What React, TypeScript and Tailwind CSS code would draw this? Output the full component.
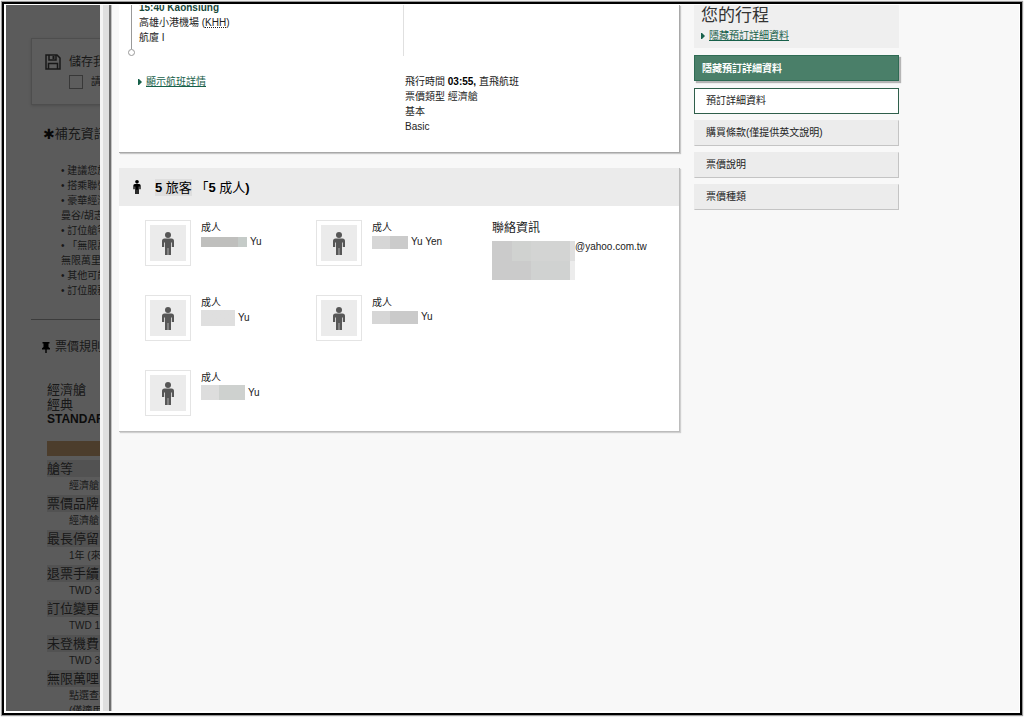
import { useState } from "react";
import type { ReactNode } from "react";

interface Passenger {
  id: number;
  name: string;
  mask: string;
  tint: string;
}

const passengers: Passenger[] = [
  { id: 1, name: "Yu", mask: "w-[46px] h-[10px]", tint: "from-[#bfbfbd] from-80% to-[#c5cbc8] to-80%" },
  { id: 2, name: "Yu Yen", mask: "w-[36px] h-[13px]", tint: "from-[#d6d6d6] from-50% to-[#cbcbcb] to-50%" },
  { id: 3, name: "Yu", mask: "w-[34px] h-[16px]", tint: "from-[#dfdfdf] to-[#dfdfdf]" },
  { id: 4, name: "Yu", mask: "w-[46px] h-[13px]", tint: "from-[#d6d6d6] from-40% to-[#cacaca] to-40%" },
  { id: 5, name: "Yu", mask: "w-[44px] h-[15px]", tint: "from-[#dddddd] from-40% to-[#ced1cf] to-40%" },
];

const notes = [
  "• 建議您於",
  "• 搭乘聯營",
  "• 豪華經濟",
  "曼谷/胡志",
  "• 訂位艙等",
  "• 「無限萬",
  "無限萬里遊",
  "• 其他可能",
  "• 訂位服務",
];

const fareRules = [
  { title: "艙等", detail: "經濟艙" },
  { title: "票價品牌", detail: "經濟艙" },
  { title: "最長停留", detail: "1年 (來回)" },
  { title: "退票手續", detail: "TWD 3000" },
  { title: "訂位變更", detail: "TWD 1000" },
  { title: "未登機費", detail: "TWD 3000" },
  { title: "無限萬哩", detail: "點選查看" },
];

const tabs = ["預訂詳細資料", "購買條款(僅提供英文說明)", "票價說明", "票價種類"];

function PersonIcon({ className }: { className: string }) {
  return (
    <svg viewBox="0 0 12 23" className={className} fill="currentColor" aria-hidden="true">
      <circle cx="6" cy="3" r="3" />
      <path d="M2.500 6.500h7A2.500 2.500 0 0 1 12 9v6H9.800v-4.500H9V23H6.300v-7h-.6v7H3V10.500h-.8V15H0V9a2.500 2.500 0 0 1 2.500-2.500Z" />
    </svg>
  );
}

function SaveIcon() {
  return (
    <svg viewBox="0 0 16 16" className="size-4 shrink-0" fill="none" stroke="currentColor" strokeWidth="1.5" aria-hidden="true">
      <path d="M1 1h11l3 3v11H1V1Z" />
      <path d="M4 1v5h7V1M3.500 15V9.500h9V15" />
      <path d="M8.500 2v3" strokeWidth="2" />
    </svg>
  );
}

function PinIcon() {
  return (
    <svg viewBox="0 0 8 11" className="h-[11px] w-2 shrink-0 text-black" fill="currentColor" aria-hidden="true">
      <path d="M.5 0h7v1.500H6.500V5L8 6.300V7.500H4.700V11H3.300V7.500H0V6.300L1.500 5V1.500h-1V0Z" />
    </svg>
  );
}

function ArrowLink({ children }: { children: ReactNode }) {
  return (
    <a href="#details" className="flex items-center gap-1 text-[#17604a]">
      <svg viewBox="0 0 4 6" className="h-[6px] w-1" fill="currentColor" aria-hidden="true">
        <path d="M0 0h1l3 3-3 3H0Z" />
      </svg>
      <span className="underline">{children}</span>
    </a>
  );
}

function DimmedPage() {
  return (
    <aside className="w-[94px] shrink-0 overflow-hidden bg-[#5b5b5b] pl-[25px] whitespace-nowrap text-[#181818]">
      <div className="mt-[33px] h-[67px] w-60 border border-[#4e4e4e] bg-[#5d5d5d] pt-[15px] pl-[13px] shadow">
        <div className="flex items-center gap-2 text-xs">
          <SaveIcon />
          <span>儲存我的行程</span>
        </div>
        <label className="mt-1 ml-6 flex items-center gap-2">
          <input type="checkbox" className="size-[14px] appearance-none border border-[#383838]" />
          請寄送
        </label>
      </div>

      <section className="mt-4 h-[199px] w-60 border-b border-[#3c3c3c] pl-3">
        <h2 className="flex items-center pt-1 text-[13px] leading-[18px]">
          <span className="font-['DejaVu_Sans'] text-[14px] font-bold text-[#080808]">✱</span>
          補充資訊
        </h2>
        <ul className="mt-5 pl-[18px]">
          {notes.map((note) => (
            <li key={note}>{note}</li>
          ))}
        </ul>
      </section>

      <section className="mt-[14px] w-60 pl-4">
        <h2 className="-ml-[5px] flex items-center gap-[5px] pt-[6px] text-xs leading-[15px]">
          <PinIcon />
          票價規則
        </h2>
        <p className="mt-[27px] text-[13px] leading-[15px]">
          經濟艙
          <br />
          經典
        </p>
        <b className="block text-xs leading-[14px] text-[#0c0c0c]">STANDARD</b>
        <div className="mt-[15px] h-[15px] bg-[#4c3d2c]" />
        <dl className="mt-1">
          {fareRules.map((rule) => (
            <div key={rule.title}>
              <dt className="mt-[2px] mb-px bg-[#525252] text-[13px] leading-[17px]">{rule.title}</dt>
              <dd className="pl-[22px]">{rule.detail}</dd>
            </div>
          ))}
          <dd className="pl-[22px]">(僅適用於)</dd>
        </dl>
      </section>
    </aside>
  );
}

function FlightCard() {
  return (
    <section className="flex h-[148px] border-r border-b border-[#a8a8a8] bg-white shadow-[1px_1px_1px_#c8c8c8]">
      <div className="w-[286px] pl-[9px]">
        <div className="mr-px flex h-[51px] gap-1 border-r border-[#e0e0e0]">
          <div className="flex w-[7px] flex-col items-center">
            <span className="w-px flex-1 bg-[#999]" />
            <span className="size-[7px] rounded-full border border-[#999]" />
          </div>
          <div className="-mt-[5px]">
            <b className="block text-[#17493a]">15:40 Kaohsiung</b>
            <p>
              高雄小港機場 (<abbr title="Kaohsiung" className="underline decoration-dotted">KHH</abbr>)
            </p>
            <p>航廈 I</p>
          </div>
        </div>
        <div className="mt-[18px] pl-[10px]">
          <ArrowLink>顯示航班詳情</ArrowLink>
        </div>
      </div>
      <div className="mt-[69px]">
        <p>
          飛行時間 <b className="text-black">03:55,</b> 直飛航班
        </p>
        <p>票價類型 經濟艙</p>
        <p>基本</p>
        <p>Basic</p>
      </div>
    </section>
  );
}

function PassengerItem({ passenger }: { passenger: Passenger }) {
  return (
    <li className="flex gap-[10px]">
      <div className="flex size-[46px] items-center justify-center border border-[#e4e4e4] p-1">
        <div className="flex size-full items-center justify-center bg-[#ebebeb]">
          <PersonIcon className="h-[23px] w-3 text-[#575757]" />
        </div>
      </div>
      <div className="pt-px">
        <p className="leading-[14px]">成人</p>
        <p className="flex items-center gap-[3px] leading-[14px]">
          <span className={`bg-linear-to-r ${passenger.mask} ${passenger.tint}`} />
          {passenger.name}
        </p>
      </div>
    </li>
  );
}

function PassengersCard() {
  return (
    <section className="mt-[15px] border-r border-b border-[#bcbcbc] bg-white shadow-[1px_1px_1px_#d0d0d0]">
      <h2 className="flex h-[38px] items-center gap-[14px] bg-[#ebebeb] pl-[14px] text-[13px] text-black">
        <PersonIcon className="h-[14px] w-2" />
        <span>
          <span className="bg-[#dedede] py-px">
            <b>5</b> 旅客
          </span>{" "}
          「<b>5</b> 成人<b>)</b>
        </span>
      </h2>
      <div className="flex pt-[14px] pb-[15px] pl-[26px]">
        <ul className="grid grid-cols-[171px_176px] gap-y-[29px]">
          {passengers.map((p) => (
            <PassengerItem key={p.id} passenger={p} />
          ))}
        </ul>
        <div className="pt-px">
          <h3 className="text-xs leading-[14px]">聯絡資訊</h3>
          <div className="flex pt-[6px]">
            <div className="grid h-[39px] w-[83px] grid-cols-[20px_19px_39px_5px] grid-rows-2">
              <span className="bg-[#cbcbcb]" />
              <span className="bg-[#d0d2d0]" />
              <span className="bg-[#d3d4d3]" />
              <span className="bg-[#dfdfdf]" />
              <span className="bg-[#cbcbcb]" />
              <span className="bg-[#cbcbcb]" />
              <span className="bg-[#d0d2d1]" />
              <span className="bg-[#ececec]" />
            </div>
            <span className="leading-3">@yahoo.com.tw</span>
          </div>
        </div>
      </div>
    </section>
  );
}

function TripSidebar() {
  const [active, setActive] = useState(0);

  return (
    <nav className="flex w-[205px] flex-col">
      <div className="h-[43px] bg-[#efefef] pl-[7px]">
        <h2 className="text-[17px] leading-[22px] text-[#333]">您的行程</h2>
        <div className="pt-px">
          <ArrowLink>隱藏預訂詳細資料</ArrowLink>
        </div>
      </div>
      <button
        type="button"
        className="mt-[7px] h-[26px] border border-[#2f6b54] bg-[#4a7f69] pl-[7px] text-left font-bold text-white shadow-[2px_2px_1px_#b5b5b5]"
      >
        隱藏預訂詳細資料
      </button>
      <div className="mt-[7px] flex flex-col gap-[6px]">
        {tabs.map((tab, i) => (
          <button
            key={tab}
            type="button"
            onClick={() => setActive(i)}
            className={`h-[26px] border pb-[2px] pl-[11px] text-left ${
              i === active
                ? "border-[#2f5f4b] bg-white"
                : "border-t-[#ececec] border-r-[#c4c4c4] border-b-[#c4c4c4] border-l-[#ececec] bg-[#ececec]"
            }`}
          >
            {tab}
          </button>
        ))}
      </div>
    </nav>
  );
}

export default function App() {
  return (
    <div className="h-screen overflow-hidden bg-white p-[2px] font-['Liberation_Sans','Noto_Sans_CJK_TC',sans-serif] text-[10px] leading-[15px] text-[#222]">
      <div className="flex h-full overflow-hidden border-2 border-black pt-px pr-px pb-[2px] pl-[2px] shadow-[0_0_1px_1px_#999]">
        <DimmedPage />
        <div className="flex w-3 shrink-0">
          <div className="w-[3px] bg-[#f4f4f4]" />
          <div className="w-[6px] bg-[#dfdfdf]" />
          <div className="w-[2px] bg-[#6e6e6e]" />
          <div className="w-px bg-[#c4c4c4]" />
        </div>
        <main className="flex min-w-0 flex-1 gap-[14px] overflow-hidden bg-[#f8f8f8] pl-[7px]">
          <div className="w-[561px] shrink-0">
            <FlightCard />
            <PassengersCard />
          </div>
          <TripSidebar />
        </main>
      </div>
    </div>
  );
}
